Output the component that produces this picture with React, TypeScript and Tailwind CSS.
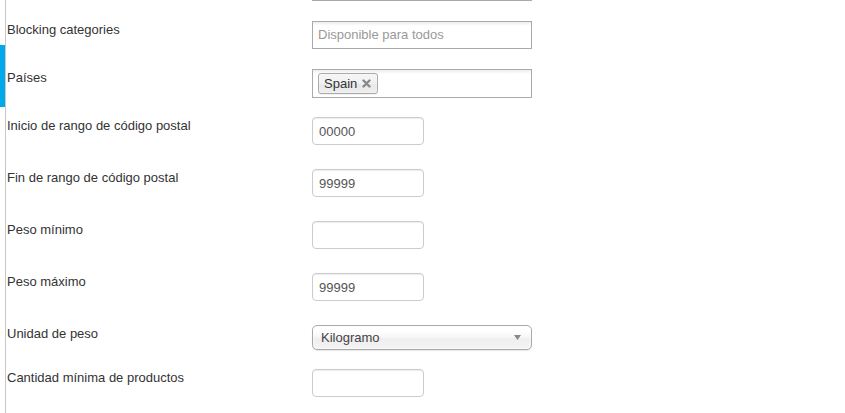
import type { ReactNode } from "react";

const font = "font-['Liberation_Sans',Arial,sans-serif]";

function Row({ label, mt, children }: { label?: string; mt: string; children: ReactNode }) {
  return (
    <div className={`flex items-start ${mt}`}>
      <label className="w-[305px] shrink-0 leading-[18px] text-[#333]">{label}</label>
      {children}
    </div>
  );
}

function SmallInput({ value }: { value?: string }) {
  return (
    <input
      readOnly
      defaultValue={value}
      className="h-[28px] w-[112px] rounded-[4px] border border-[#ccc] bg-white px-[6px] text-[13px] text-[#555] shadow-[inset_0_1px_1px_rgba(0,0,0,0.075)] outline-none"
    />
  );
}

function RemoveIcon() {
  return (
    <svg width="9" height="9" viewBox="0 0 9 9" className="text-[#888]">
      <path d="M1.5 1.5 L7.5 7.5 M7.5 1.5 L1.5 7.5" stroke="currentColor" strokeWidth="2.4" strokeLinecap="round" />
    </svg>
  );
}

export default function App() {
  return (
    <div className={`flex h-[413px] w-[845px] overflow-hidden bg-white text-[13px] ${font}`}>
      <div className="flex w-[5px] shrink-0 flex-col">
        <div className="h-[45px]" />
        <div className="h-[62px] bg-[#00aaea]" />
      </div>
      <div className="flex-1 border-l border-[#c8c8c8] pl-px">
        <Row mt="-mt-[27px]">
          <div className="h-[28px] w-[220px] border border-[#aaa] bg-white" />
        </Row>

        <Row label="Blocking categories" mt="mt-[20px]">
          <div className="flex h-[28px] w-[220px] items-center border border-[#aaa] bg-[linear-gradient(#eee_1%,#fff_15%)] pl-[5px] text-[#999]">
            Disponible para todos
          </div>
        </Row>

        <Row label="Países" mt="mt-[20px]">
          <div className="h-[29px] w-[220px] border border-[#aaa] bg-[linear-gradient(#eee_1%,#fff_15%)] pl-[5px] pt-[3px]">
            <span className="inline-flex h-[21px] items-center gap-[5px] rounded-[3px] border border-[#aaa] bg-[linear-gradient(#f4f4f4_20%,#f0f0f0_50%,#e8e8e8_52%,#eee_100%)] pl-[5px] pr-[6px] leading-[13px] text-[#333] shadow-[inset_0_0_2px_white,0_1px_0_rgba(0,0,0,0.05)]">
              Spain
              <RemoveIcon />
            </span>
          </div>
        </Row>

        <Row label="Inicio de rango de código postal" mt="mt-[19px]">
          <SmallInput value="00000" />
        </Row>

        <Row label="Fin de rango de código postal" mt="mt-[24px]">
          <SmallInput value="99999" />
        </Row>

        <Row label="Peso mínimo" mt="mt-[24px]">
          <SmallInput />
        </Row>

        <Row label="Peso máximo" mt="mt-[24px]">
          <SmallInput value="99999" />
        </Row>

        <Row label="Unidad de peso" mt="mt-[24px]">
          <div className="flex h-[25px] w-[220px] items-center justify-between rounded-[5px] border border-[#aaa] bg-[linear-gradient(#fff_20%,#f6f6f6_50%,#eee_52%,#f4f4f4_100%)] pl-[8px] pr-[10px] text-[#444] shadow-[inset_0_0_3px_white,0_1px_1px_rgba(0,0,0,0.1)]">
            <span>Kilogramo</span>
            <svg width="7" height="5" viewBox="0 0 7 5">
              <path d="M0 0 H7 L3.5 5 Z" fill="#888" />
            </svg>
          </div>
        </Row>

        <Row label="Cantidad mínima de productos" mt="mt-[19px]">
          <SmallInput />
        </Row>
      </div>
    </div>
  );
}
